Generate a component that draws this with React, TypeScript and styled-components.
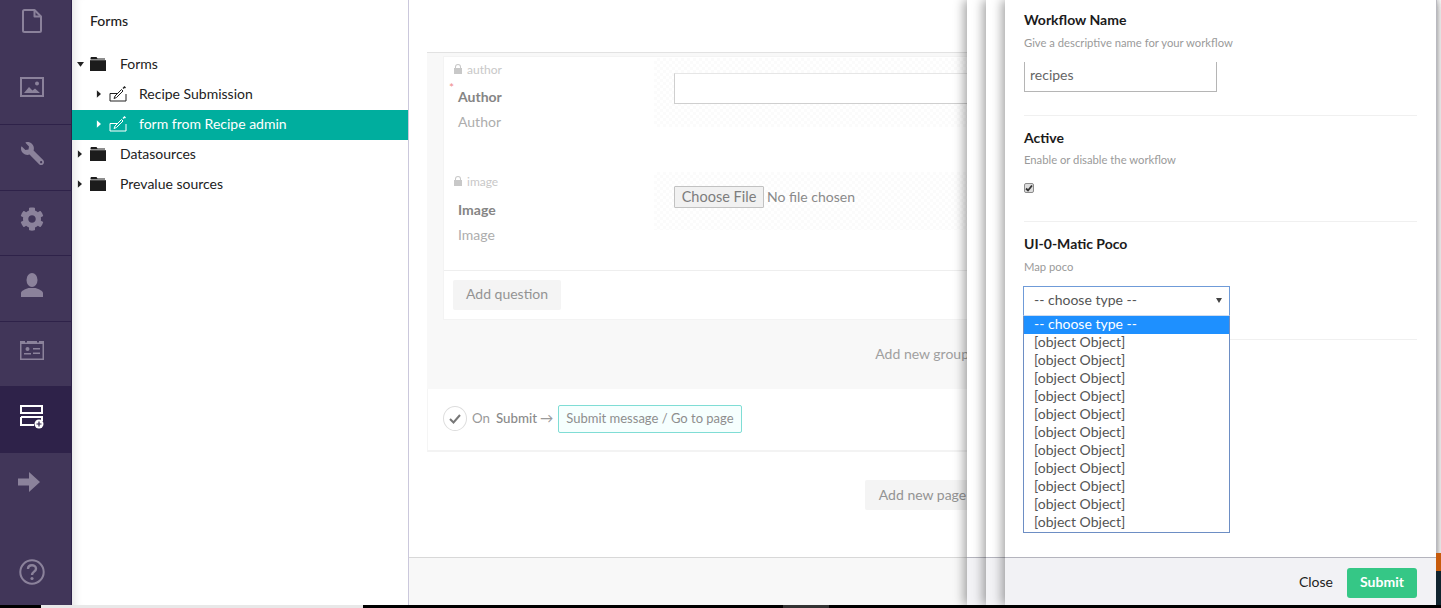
import React from "react";
import styled, { createGlobalStyle } from "styled-components";
import { FaCog, FaWrench } from "react-icons/fa";

const GlobalStyle = createGlobalStyle`
  html, body {
    margin: 0;
    padding: 0;
    height: 608px;
    overflow: hidden;
    background: #fff;
    font-family: "Lato", "Open Sans", sans-serif;
    font-size: 14px;
    color: #333;
  }
  * {
    box-sizing: border-box;
  }
`;

function DocIcon() {
  return (
    <svg width="20" height="24" viewBox="0 0 20 24" fill="none" stroke="currentColor" strokeWidth="2" strokeLinejoin="round">
      <path d="M2.5 1h10l6.5 6.5v14a1.5 1.5 0 0 1-1.5 1.5h-15A1.5 1.5 0 0 1 1 21.500v-19A1.500 1.500 0 0 1 2.500 1z" />
      <path d="M12.500 1v6.500H19" />
    </svg>
  );
}

function ImageIcon() {
  return (
    <svg width="24" height="20" viewBox="0 0 24 20">
      <rect x="1" y="1" width="22" height="18" fill="none" stroke="currentColor" strokeWidth="2" />
      <circle cx="17" cy="6.500" r="2" fill="currentColor" />
      <path d="M4 16l5-6 3.500 3.500 2.500-2 5 4.500z" fill="currentColor" />
    </svg>
  );
}

function UserIcon() {
  return (
    <svg width="22" height="24" viewBox="0 0 22 24" fill="currentColor">
      <ellipse cx="11" cy="7" rx="5.500" ry="7" />
      <path d="M0 24v-4c0-2.500 4-3.500 7.500-5h7c3.500 1.500 7.500 2.500 7.500 5v4z" />
    </svg>
  );
}

function CardIcon() {
  return (
    <svg width="24" height="20" viewBox="0 0 24 20" fill="currentColor">
      <path d="M0 1h5v1.500h2V1h10v1.500h2V1h5v19H0zM1.500 4v14.500h21V4z" />
      <circle cx="7.500" cy="9" r="2" />
      <rect x="4" y="13" width="7" height="1.500" />
      <rect x="13" y="8" width="7" height="1.500" />
      <rect x="13" y="12.500" width="7" height="1.500" />
    </svg>
  );
}

function FormsIcon() {
  return (
    <svg width="24" height="24" viewBox="0 0 24 24">
      <rect x="1" y="1" width="21" height="7" fill="none" stroke="currentColor" strokeWidth="2" />
      <path d="M1 12h21v4M1 12v8h13" fill="none" stroke="currentColor" strokeWidth="2" />
      <circle cx="19" cy="19" r="4.500" fill="currentColor" />
      <path d="M16.500 19h5M19 16.500v5" stroke="#2e2249" strokeWidth="1.200" />
    </svg>
  );
}

function ArrowIcon() {
  return (
    <svg width="22" height="20" viewBox="0 0 22 20" fill="currentColor">
      <path d="M0 6.500h11V0l11 10-11 10v-6.500H0z" />
    </svg>
  );
}

function HelpIcon() {
  return (
    <svg width="26" height="26" viewBox="0 0 26 26" fill="none" stroke="currentColor">
      <circle cx="13" cy="13" r="11.700" strokeWidth="2" />
      <path d="M9 10c0-2.500 2-3.700 4-3.700s4 1.300 4 3.400c0 3-4 3-4 6.300" strokeWidth="2.400" />
      <circle cx="13" cy="19.500" r="1.600" fill="currentColor" stroke="none" />
    </svg>
  );
}

function FolderIcon() {
  return (
    <svg width="16" height="14" viewBox="0 0 16 14" fill="#1c1c1c">
      <path d="M1 0h5.500l1 1.500H15V2.400H0.500V1z" />
      <rect x="0" y="3.200" width="16" height="10.800" />
    </svg>
  );
}

function FormIcon() {
  return (
    <svg width="18" height="16" viewBox="0 0 18 16" fill="none" stroke="currentColor" strokeWidth="1">
      <path d="M8 7.500H1v7.500h16V8" />
      <path d="M5 12.500l1-2.500 6.500-6.500 1.500 1.500L7.500 11.500z" />
      <path d="M14 2.500l1.500-1.500M15 .5l1.500 1.500" strokeWidth="1.400" />
    </svg>
  );
}

function LockIcon() {
  return (
    <svg width="8" height="10" viewBox="0 0 8 10" fill="currentColor">
      <path d="M1 4V3a3 3 0 0 1 6 0v1h1v6H0V4zm1 0h4V3a2 2 0 0 0-4 0z" />
    </svg>
  );
}

type TreeItem = {
  label: string;
  level: number;
  open?: boolean;
  active?: boolean;
};

const treeItems: TreeItem[] = [
  { label: "Forms", level: 1, open: true },
  { label: "Recipe Submission", level: 2 },
  { label: "form from Recipe admin", level: 2, active: true },
  { label: "Datasources", level: 1 },
  { label: "Prevalue sources", level: 1 },
];

function App() {
  return (
    <Page>
      <GlobalStyle />
      <Shell>
        <Sidebar>
          <NavItem $height={54} $pad={12}><DocIcon /></NavItem>
          <NavItem $height={71} $pad={4} $line><ImageIcon /></NavItem>
          <NavItem $height={66} $pad={9} $line><FaWrench size={23} style={{ transform: "scaleX(-1)" }} /></NavItem>
          <NavItem $height={65} $pad={8} $line><FaCog size={24} /></NavItem>
          <NavItem $height={66} $pad={7} $line><UserIcon /></NavItem>
          <NavItem $height={64} $pad={8}><CardIcon /></NavItem>
          <NavItem $height={67} $pad={6} $active><FormsIcon /></NavItem>
          <NavItem $height={58} $shift={6}><ArrowIcon /></NavItem>
          <HelpSlot><HelpIcon /></HelpSlot>
        </Sidebar>

        <TreePanel>
          <TreeTitle>Forms</TreeTitle>
          {treeItems.map((item) => (
            <TreeRow key={item.label} $active={item.active} $level={item.level}>
              <Caret $open={item.open} />
              {item.level === 1 ? <FolderIcon /> : <FormIcon />}
              <TreeLabel $level={item.level}>{item.label}</TreeLabel>
            </TreeRow>
          ))}
        </TreePanel>

        <Main>
          <Content>
            <GroupCard>
              <QuestionCard>
                <Question $height={112}>
                  <QuestionInfo>
                    <Alias><LockIcon />author</Alias>
                    <Required>*</Required>
                    <QuestionName $gap={11}>Author</QuestionName>
                    <QuestionHint>Author</QuestionHint>
                  </QuestionInfo>
                  <Dotted $top={1} $height={69} $pad={15}>
                    <TextBox />
                  </Dotted>
                </Question>
                <Question $height={101}>
                  <QuestionInfo>
                    <Alias><LockIcon />image</Alias>
                    <QuestionName $gap={12}>Image</QuestionName>
                    <QuestionHint>Image</QuestionHint>
                  </QuestionInfo>
                  <Dotted $top={3} $height={58} $pad={14}>
                    <FileRow>
                      <FileButton type="button">Choose File</FileButton>
                      <FileName>No file chosen</FileName>
                    </FileRow>
                  </Dotted>
                </Question>
                <CardActions>
                  <GreyButton type="button">Add question</GreyButton>
                </CardActions>
              </QuestionCard>
              <AddGroup>Add new group</AddGroup>
            </GroupCard>
            <SubmitRow>
              <CheckCircle>
                <svg width="12" height="10" viewBox="0 0 12 10" fill="none" stroke="#777" strokeWidth="2">
                  <path d="M1 5l3.500 3.500L11 1" />
                </svg>
              </CheckCircle>
              <RowText>On</RowText>
              <SubmitWord>Submit</SubmitWord>
              <RowText>→</RowText>
              <MessageBox>Submit message / Go to page</MessageBox>
            </SubmitRow>
            <PageActions>
              <AddPage type="button">Add new page</AddPage>
            </PageActions>
          </Content>
          <MainFooter />
        </Main>

        <Dialogs>
          <Panel $left={0}><PanelBody /><PanelFooter /></Panel>
          <Panel $left={19}><PanelBody /><PanelFooter /></Panel>
          <Panel $left={38}>
            <PanelBody>
              <Section $top={11} $bottom={23}>
                <Title>Workflow Name</Title>
                <Hint>Give a descriptive name for your workflow</Hint>
                <NameInput>recipes</NameInput>
              </Section>
              <Section $top={13} $bottom={28}>
                <Title>Active</Title>
                <Hint $clip>Enable or disable the workflow</Hint>
                <CheckBox>
                  <svg width="8" height="8" viewBox="0 0 8 8" fill="none" stroke="#333" strokeWidth="1.800">
                    <path d="M1 4.500l2 2L7 1.500" />
                  </svg>
                </CheckBox>
              </Section>
              <Section $top={13} $bottom={23}>
                <Title>UI-0-Matic Poco</Title>
                <Hint>Map poco</Hint>
                <SelectWrap>
                  <SelectBox>
                    -- choose type --
                    <SelectArrow />
                  </SelectBox>
                  <OptionList>
                    <OptionRow $selected>-- choose type --</OptionRow>
                    {Array.from({ length: 11 }).map((_, i) => (
                      <OptionRow key={i}>[object Object]</OptionRow>
                    ))}
                  </OptionList>
                </SelectWrap>
              </Section>
            </PanelBody>
            <PanelFooter>
              <CloseLink>Close</CloseLink>
              <SubmitButton type="button">Submit</SubmitButton>
            </PanelFooter>
          </Panel>
        </Dialogs>

        <EdgeStrip>
          <EdgeBlock $color="#c75b0c" $height={18} />
          <EdgeBlock $color="#10242e" $height={34} />
        </EdgeStrip>
      </Shell>
      <BottomBar>
        <BarPiece $width={41} $color="#000" />
        <BarPiece $width={322} $color="#e8e8e8" />
        <BarPiece $width={420} $color="#000" />
        <BarPiece $width={46} $color="#333" />
        <BarPiece $grow $color="#000" />
      </BottomBar>
    </Page>
  );
}

export default App;

const Page = styled.div`
  display: flex;
  flex-direction: column;
  width: 1441px;
  height: 608px;
  overflow: hidden;
`;

const Shell = styled.div`
  position: relative;
  display: flex;
  flex: 1;
  min-height: 0;
`;

const BottomBar = styled.div`
  display: flex;
  height: 3px;
`;

const BarPiece = styled.div<{ $width?: number; $color: string; $grow?: boolean }>`
  width: ${(p) => (p.$width ? `${p.$width}px` : "auto")};
  flex: ${(p) => (p.$grow ? 1 : "none")};
  background: ${(p) => p.$color};
`;

const Sidebar = styled.nav`
  display: flex;
  flex-direction: column;
  width: 72px;
  flex: none;
  background: #413659;
  border-right: 1px solid #2e2249;
  color: #8b829b;
`;

const NavItem = styled.div<{ $height: number; $pad?: number; $line?: boolean; $active?: boolean; $shift?: number }>`
  display: flex;
  align-items: center;
  justify-content: center;
  flex: none;
  height: ${(p) => p.$height}px;
  padding-bottom: ${(p) => p.$pad ?? 0}px;
  padding-right: ${(p) => 7 + (p.$shift ?? 0)}px;
  border-bottom: ${(p) => (p.$line ? "1px solid #2e2249" : "none")};
  background: ${(p) => (p.$active ? "#2e2249" : "transparent")};
  color: ${(p) => (p.$active ? "#fff" : "inherit")};
`;

const HelpSlot = styled.div`
  display: flex;
  justify-content: center;
  margin-top: auto;
  padding: 0 7px 20px 0;
`;

const TreePanel = styled.aside`
  width: 336px;
  flex: none;
  background: #fff;
  box-shadow: inset 10px 0 10px -8px rgba(0, 0, 0, 0.12);
`;

const TreeTitle = styled.div`
  height: 50px;
  padding: 12px 0 0 18px;
  font-size: 14px;
  line-height: 18px;
  font-weight: 500;
  color: #222;
`;

const TreeRow = styled.div<{ $active?: boolean; $level: number }>`
  display: flex;
  align-items: center;
  height: 30px;
  padding-left: ${(p) => (p.$level === 1 ? 5 : 24)}px;
  padding-bottom: 2px;
  background: ${(p) => (p.$active ? "#00ae9e" : "transparent")};
  color: ${(p) => (p.$active ? "#fff" : "#222")};
  font-size: 14px;
`;

const Caret = styled.span<{ $open?: boolean }>`
  width: 13px;
  flex: none;
  display: block;
  height: 8px;
  background: currentColor;
  clip-path: ${(p) =>
    p.$open
      ? "polygon(0 25%, 7px 25%, 3.500px 85%)"
      : "polygon(0 0, 4.500px 50%, 0 100%)"};
  transform: translateX(${(p) => (p.$open ? 0 : 0.5)}px);
`;

const TreeLabel = styled.span<{ $level: number }>`
  margin-left: ${(p) => (p.$level === 1 ? 14 : 12)}px;
  padding-bottom: 2px;
  white-space: nowrap;
`;

const Main = styled.main`
  display: flex;
  flex-direction: column;
  flex: 1;
  min-width: 0;
  border-left: 1px solid #cbc8dc;
  overflow: hidden;
`;

const Content = styled.div`
  flex: 1;
  padding: 52px 441px 0 18px;
`;

const GroupCard = styled.section`
  height: 337px;
  padding: 3px 0 0 16px;
  background: #f8f8f8;
  border-top: 1px solid #e2e2e2;
`;

const QuestionCard = styled.div`
  background: #fff;
  border: 1px solid #f3f3f3;
  border-right: none;
  height: 264px;
`;

const Question = styled.div<{ $height: number }>`
  display: flex;
  height: ${(p) => p.$height}px;
`;

const QuestionInfo = styled.div`
  position: relative;
  width: 210px;
  flex: none;
  padding: 4px 0 0 10px;
`;

const Alias = styled.div`
  display: flex;
  align-items: center;
  gap: 5px;
  height: 16px;
  font-size: 12px;
  color: #c8c8c8;
`;

const Required = styled.span`
  position: absolute;
  left: 5px;
  top: 25px;
  font-size: 12px;
  line-height: 12px;
  color: #f08a8a;
`;

const QuestionName = styled.div<{ $gap: number }>`
  margin: ${(p) => p.$gap}px 0 0 4px;
  font-size: 14px;
  line-height: 18px;
  font-weight: 700;
  color: #858585;
`;

const QuestionHint = styled.div`
  margin: 7px 0 0 4px;
  font-size: 14px;
  line-height: 18px;
  color: #adadad;
`;

const Dotted = styled.div<{ $top: number; $height: number; $pad: number }>`
  flex: 1;
  height: ${(p) => p.$height}px;
  margin-top: ${(p) => p.$top}px;
  padding: ${(p) => p.$pad}px 0 0 20px;
  background: repeating-conic-gradient(#fbfbfb 0 25%, #fff 0 50%) 0 0 / 6px 6px;
`;

const TextBox = styled.div`
  width: 320px;
  height: 31px;
  background: #fff;
  border: 1px solid #cfcfcf;
  border-top: 1px solid #e6e6e6;
`;

const FileRow = styled.div`
  display: flex;
  align-items: center;
  gap: 3px;
  font-size: 14px;
  color: #8a8a8a;
`;

const FileName = styled.span`
  padding-bottom: 2px;
`;

const FileButton = styled.button`
  width: 90px;
  height: 22px;
  padding: 0 0 2px;
  font: inherit;
  font-size: 14.5px;
  color: #7d7d7d;
  background: #f1f1f1;
  border: 1px solid #c2c2c2;
  border-radius: 1px;
`;

const CardActions = styled.div`
  padding: 9px 0 0 9px;
  border-top: 1px solid #eee;
`;

const GreyButton = styled.button`
  height: 30px;
  width: 108px;
  padding: 0 0 4px;
  font: inherit;
  color: #939393;
  background: #f4f4f4;
  border: none;
  border-radius: 2px;
`;

const AddGroup = styled.div`
  margin: 25px 31px 0 0;
  text-align: right;
  line-height: 18px;
  color: #a0a0a0;
`;

const SubmitRow = styled.div`
  display: flex;
  align-items: center;
  height: 63px;
  padding: 0 0 2px 15px;
  background: #fff;
  border-left: 1px solid #f5f5f5;
  border-bottom: 2px solid #f3f3f3;
  font-size: 13.300px;
  color: #9a9a9a;
`;

const RowText = styled.span`
  padding-bottom: 2px;
`;

const CheckCircle = styled.span`
  display: flex;
  align-items: center;
  justify-content: center;
  width: 24px;
  height: 25px;
  margin-right: 5px;
  border: 1px solid #ddd;
  border-radius: 50%;
`;

const SubmitWord = styled.span`
  margin: 0 3px 0 6px;
  padding-bottom: 2px;
  font-weight: 500;
  color: #8a8a8a;
`;

const MessageBox = styled.span`
  display: flex;
  align-items: center;
  height: 28px;
  margin-left: 5px;
  padding: 0 7px 2px;
  font-size: 13px;
  color: #8e8e8e;
  background: #f6fffe;
  border: 1px solid #7fddd5;
  border-radius: 2px;
  white-space: nowrap;
`;

const PageActions = styled.div`
  display: flex;
  justify-content: flex-end;
  margin: 28px 20px 0 0;
`;

const AddPage = styled(GreyButton)`
  width: 115px;
  padding-bottom: 2px;
`;

const MainFooter = styled.div`
  flex: none;
  height: 48px;
  background: #f8f8f8;
  border-top: 1px solid #d8d8d8;
`;

const Dialogs = styled.div`
  position: absolute;
  top: 0;
  bottom: 0;
  left: 967px;
  right: 4px;
`;

const Panel = styled.div<{ $left: number }>`
  position: absolute;
  top: 0;
  bottom: 0;
  left: ${(p) => p.$left}px;
  right: 0;
  display: flex;
  flex-direction: column;
  background: #fff;
  border-right: 1px solid #b9b9c0;
  box-shadow: -3px 0 10px rgba(0, 0, 0, 0.36);
`;

const PanelBody = styled.div`
  flex: 1;
  min-height: 0;
  padding: 0 19px;
`;

const PanelFooter = styled.div`
  display: flex;
  align-items: center;
  justify-content: flex-end;
  flex: none;
  height: 48px;
  padding: 2px 19px 0 0;
  background: #f2f2f5;
  border-top: 1px solid #b4b4bd;
`;

const Section = styled.section<{ $top: number; $bottom: number }>`
  padding: ${(p) => p.$top}px 0 ${(p) => p.$bottom}px;
  border-bottom: 1px solid #f0f0f0;
`;

const Title = styled.div`
  font-size: 14px;
  line-height: 18px;
  font-weight: 700;
  color: #1b1b1b;
`;

const Hint = styled.div<{ $clip?: boolean }>`
  margin-top: ${(p) => (p.$clip ? 5 : 6)}px;
  height: ${(p) => (p.$clip ? 13 : 16)}px;
  overflow: hidden;
  font-size: 11.250px;
  line-height: 16px;
  color: #9a9a9a;
`;

const NameInput = styled.div`
  width: 193px;
  height: 30px;
  margin-top: 11px;
  padding-left: 5px;
  line-height: 26px;
  font-size: 14px;
  color: #666;
  border: 1px solid #b5b5b5;
  border-top: none;
`;

const CheckBox = styled.span`
  display: flex;
  align-items: center;
  justify-content: center;
  width: 10px;
  height: 10px;
  margin-top: 18px;
  background: #ddd;
  border: 1px solid #8c8c8c;
  border-radius: 2px;
`;

const SelectWrap = styled.div`
  position: relative;
  width: 207px;
  margin: 11px 0 0 -1px;
`;

const SelectBox = styled.div`
  position: relative;
  height: 30px;
  padding-left: 10px;
  font-size: 14px;
  line-height: 26px;
  color: #555;
  background: #fff;
  border: 1px solid #6f9bd8;
  border-bottom-color: #cfdcef;
`;

const SelectArrow = styled.span`
  position: absolute;
  right: 7px;
  top: 11px;
  width: 0;
  height: 0;
  border-left: 3px solid transparent;
  border-right: 3px solid transparent;
  border-top: 5px solid #444;
`;

const OptionList = styled.div`
  position: absolute;
  top: 30px;
  left: 0;
  right: 0;
  z-index: 2;
  background: #fff;
  border: 1px solid #6d8ec4;
  border-top: none;
`;

const OptionRow = styled.div<{ $selected?: boolean }>`
  height: 18px;
  padding-left: 10px;
  font-size: 14px;
  line-height: 16px;
  color: ${(p) => (p.$selected ? "#fff" : "#555")};
  background: ${(p) => (p.$selected ? "#1e90ff" : "transparent")};
`;

const CloseLink = styled.span`
  margin-right: 14px;
  padding-bottom: 2px;
  font-size: 14px;
  color: #222;
`;

const SubmitButton = styled.button`
  width: 70px;
  height: 30px;
  padding: 0 0 2px;
  font: inherit;
  font-weight: 700;
  color: #fff;
  background: #35c786;
  border: none;
  border-radius: 3px;
`;

const EdgeStrip = styled.div`
  position: absolute;
  right: 0;
  bottom: 0;
  width: 5px;
`;

const EdgeBlock = styled.div<{ $color: string; $height: number }>`
  height: ${(p) => p.$height}px;
  background: ${(p) => p.$color};
`;
